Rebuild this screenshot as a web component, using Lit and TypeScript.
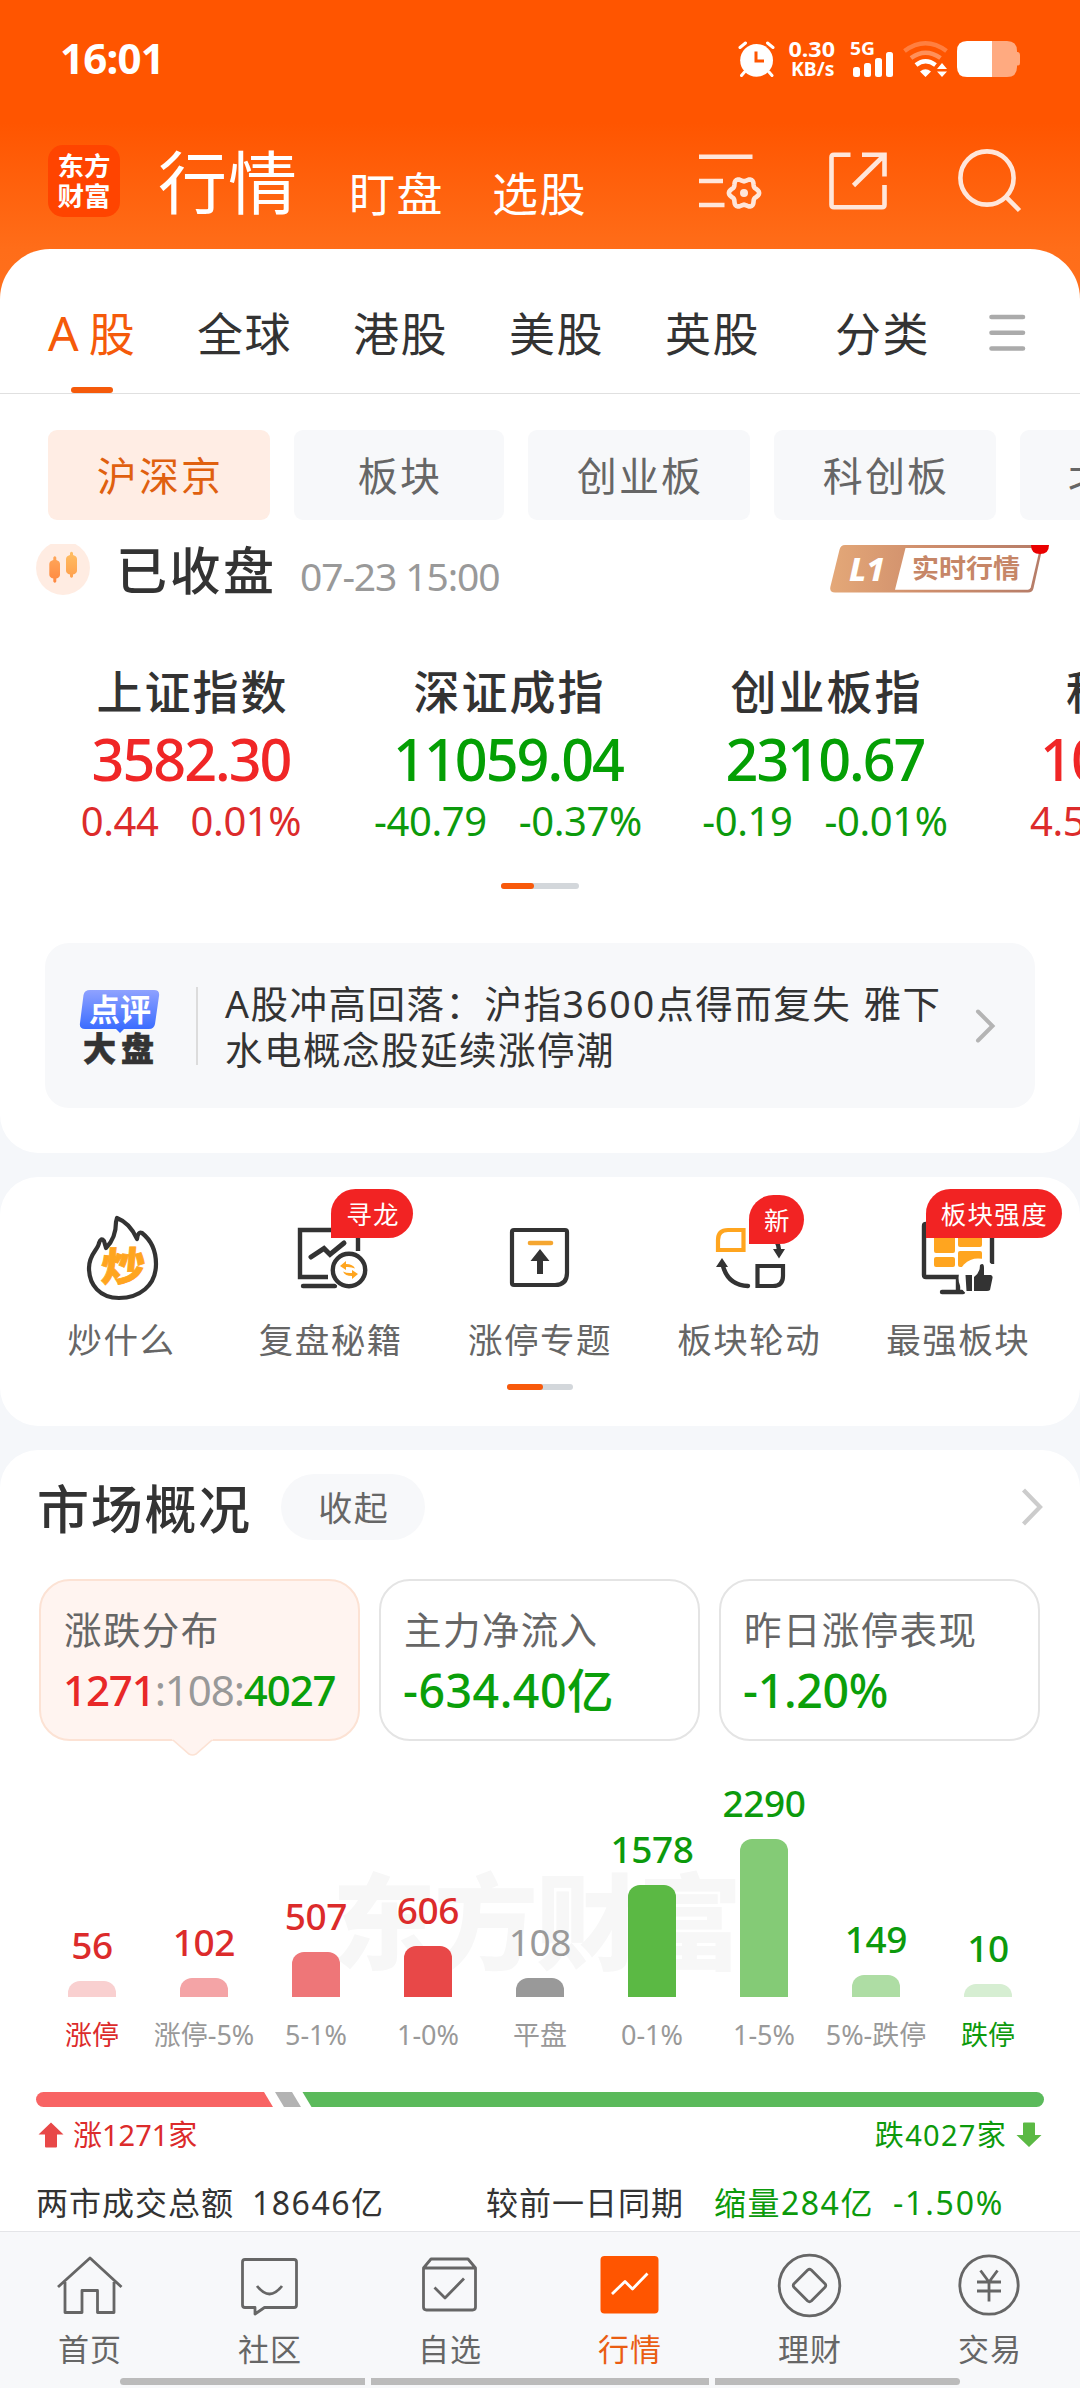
import { LitElement, html, svg, css } from "lit";
import { customElement } from "lit/decorators.js";
import { classMap } from "lit/directives/class-map.js";

interface Bar {
  count: string;
  label: string;
  height: number;
  color: string;
  tone: string;
  edge?: boolean;
}

const TABS = ["A股", "全球", "港股", "美股", "英股", "分类"];
const CHIPS = ["沪深京", "板块", "创业板", "科创板", "北"];

const INDICES = [
  { name: "上证指数", value: "3582.30", diff: "0.44", pct: "0.01%", tone: "up" },
  { name: "深证成指", value: "11059.04", diff: "-40.79", pct: "-0.37%", tone: "down" },
  { name: "创业板指", value: "2310.67", diff: "-0.19", pct: "-0.01%", tone: "down" },
  { name: "科", value: "10", diff: "4.5", pct: "", tone: "up", cut: true },
];

const BARS: Bar[] = [
  { count: "56", label: "涨停", height: 16, color: "#f9d0d0", tone: "up", edge: true },
  { count: "102", label: "涨停-5%", height: 19, color: "#f4a4a6", tone: "up" },
  { count: "507", label: "5-1%", height: 45, color: "#ee7678", tone: "up" },
  { count: "606", label: "1-0%", height: 51, color: "#e84848", tone: "up" },
  { count: "108", label: "平盘", height: 19, color: "#999999", tone: "flat" },
  { count: "1578", label: "0-1%", height: 112, color: "#5bb944", tone: "down" },
  { count: "2290", label: "1-5%", height: 158, color: "#84cb76", tone: "down" },
  { count: "149", label: "5%-跌停", height: 22, color: "#aedda4", tone: "down" },
  { count: "10", label: "跌停", height: 13, color: "#d6eed2", tone: "down", edge: true },
];

function gearPath(cx: number, cy: number): string {
  const pts: string[] = [];
  for (let i = 0; i < 72; i++) {
    const a = (i * Math.PI) / 36;
    const r = 13.4 + 1.7 * Math.cos(6 * a);
    pts.push(`${(cx + r * Math.cos(a)).toFixed(2)},${(cy + r * Math.sin(a)).toFixed(2)}`);
  }
  return `M${pts.join("L")}Z`;
}

const flame = svg`
  <path d="M116 1218 Q129 1223 136 1239 Q137 1231 141 1233 Q155 1244 155 1264 C155 1286 138 1298 118 1298 C99 1298 88 1285 88 1268 C88 1254 97 1250 98 1243 Q100 1237 103 1241 L105 1248 Q115 1238 115 1222 Z"
    fill="none" stroke="#333" stroke-width="4.2" stroke-linejoin="round"/>
  <text x="108" y="1281.500" class="chao" transform="skewX(-5)" textLength="44" lengthAdjust="spacingAndGlyphs" dx="103">炒</text>`;

const review = svg`
  <g fill="none" stroke="#333" stroke-width="4.4">
    <path d="M358 1251V1230H300V1277H328"/>
    <path d="M311 1257L324 1248.5L330 1254.5L344 1243" stroke-linecap="round" stroke-width="5"/>
    <path d="M303 1286H335" stroke-linecap="round"/>
    <circle cx="349" cy="1270" r="19.500" fill="#fff" stroke="none"/>
    <circle cx="349" cy="1270" r="16.2" fill="#fff"/>
  </g>
  <g fill="#ffa51f">
    <path d="M340 1266l6-5v3q7 0 9 4.500q-4-2-9-1.500v3z"/>
    <path d="M358 1274l-6 5v-3q-7 0-9-4.500q4 2 9 1.500v-3z"/>
  </g>`;

const limitUp = svg`
  <path d="M514 1230H565Q567 1230 567 1232V1273Q567 1285 555 1285H514Q512 1285 512 1283V1232Q512 1230 514 1230Z"
    fill="none" stroke="#333" stroke-width="4.2"/>
  <path d="M530 1243H551" stroke="#f5a630" stroke-width="4.6" stroke-linecap="round"/>
  <path d="M540 1249L549.500 1261H543V1274H537V1261H530.500Z" fill="#333"/>`;

const rotate = svg`
  <path d="M728 1230H743.500V1250H718V1240Q718 1230 728 1230Z" fill="none" stroke="#ffa51f" stroke-width="4.2"/>
  <path d="M757.500 1266H783V1276Q783 1286 773 1286H757.500Z" fill="none" stroke="#333" stroke-width="4.2"/>
  <path d="M722.500 1264Q727 1285 748 1286M770 1232Q778 1240 779 1250" fill="none" stroke="#333" stroke-width="4.4" stroke-linecap="round"/>
  <path d="M722 1258L728 1267H716ZM779 1258.500L785 1249H773Z" fill="#333"/>`;

const strongest = svg`
  <path d="M991 1264V1224H925Q923 1224 923 1226V1275Q923 1277 925 1277H957V1292" fill="none" stroke="#333" stroke-width="4.4"/>
  <path d="M941 1292H962" stroke="#333" stroke-width="4.4" stroke-linecap="round"/>
  <g fill="#ffa51f">
    <rect x="933" y="1232" width="21" height="21" rx="2"/><rect x="933" y="1257" width="21" height="10" rx="2"/>
    <rect x="957" y="1232" width="24" height="15" rx="2"/><rect x="957" y="1251" width="24" height="16" rx="2"/>
  </g>
  <circle cx="977" cy="1278" r="19.500" fill="#fff"/>
  <path d="M964.500 1275H971V1291H965.500ZM973 1277Q979 1273 979 1265Q983 1262 983 1268V1275H990Q992 1276 991.500 1278L989 1290Q988 1291 986 1291H973Z" fill="#333"/>`;

const TOOLS = [
  { label: "炒什么", cx: 121, icon: flame, badge: "", pos: "" },
  { label: "复盘秘籍", cx: 331, icon: review, badge: "寻龙", pos: "b1" },
  { label: "涨停专题", cx: 540, icon: limitUp, badge: "", pos: "" },
  { label: "板块轮动", cx: 749, icon: rotate, badge: "新", pos: "b2" },
  { label: "最强板块", cx: 957, icon: strongest, badge: "板块强度", pos: "b3" },
];

const NAV = [
  { label: "首页", cx: 90, icon: svg`<path d="M58 2287L90 2258L121.500 2287M65 2282V2312.500H82V2290.500H97.500V2312.500H114V2282"/>` },
  { label: "社区", cx: 270, icon: svg`<path d="M245 2259.500H294Q296.500 2259.500 296.500 2262V2305Q296.500 2307.500 294 2307.500H264.500L255 2314V2307.500H245Q242.500 2307.500 242.500 2305V2262Q242.500 2259.500 245 2259.500Z"/><path d="M257 2286Q269.500 2302 282 2286"/>` },
  { label: "自选", cx: 450, icon: svg`<path d="M423.500 2268V2307Q423.500 2310 426.500 2310H472.500Q475.500 2310 475.500 2307V2268L468 2259H431ZM423.500 2268H475.500M434.500 2287.500L445 2298L464 2278.500"/>` },
  { label: "行情", cx: 630, active: true, icon: svg`<rect x="600.500" y="2256" width="58" height="57.500" rx="4" fill="#ff5500" stroke="none"/><path d="M612 2294L625 2281.500L632.500 2289L647.500 2273.500" stroke="#fff"/>` },
  { label: "理财", cx: 810, icon: svg`<circle cx="809.500" cy="2285.500" r="30.300"/><path d="M807.700 2270Q809.500 2268.500 811.300 2270L825 2283.700Q826.500 2285.500 825 2287.300L811.300 2301Q809.500 2302.500 807.700 2301L794 2287.300Q792.500 2285.500 794 2283.700Z"/>` },
  { label: "交易", cx: 990, icon: svg`<circle cx="989" cy="2285" r="29.200"/><path d="M980.500 2270.500L989 2282L997.500 2270.500M989 2282V2301.500M977 2282H1001M977 2291H1001"/>` },
];

@customElement("app-root")
export class AppRoot extends LitElement {
  static styles = css`
    :host {
      display: block;
      width: 1080px;
      height: 2388px;
      overflow: hidden;
      background: #f5f7fa;
      color: #333;
      font-family: "Noto Sans", "Noto Sans CJK SC", sans-serif;
    }
    * { box-sizing: border-box; }
    svg { display: block; flex: none; overflow: visible; }
    span, div { white-space: nowrap; }
    .page { display: flex; flex-direction: column; height: 2388px; }
    .up { color: #dc2b2b; }
    .down { color: #0c9a0c; }
    .flat { color: #999; }

    .hero {
      flex: none;
      height: 302px;
      color: #fff;
      background: linear-gradient(#ff5500 0, #ff5500 122px, #ff6d19 249px, #ff701d 302px);
    }
    .statusbar { height: 118px; display: flex; align-items: center; padding-left: 60px; }
    .time { font-size: 42px; font-weight: 700; line-height: 50px; letter-spacing: -0.8px; width: 678px; padding-bottom: 2px; }
    .st { font-weight: 700; fill: #fff; }
    .head { height: 126px; display: flex; align-items: center; padding-left: 48px; }
    .logo {
      width: 72px; height: 72px; border-radius: 15px; background: #ff4400;
      display: flex; flex-direction: column; justify-content: center; align-items: center;
      font-weight: 700; font-size: 26.500px; line-height: 30px; padding: 0 0 1px 0;
    }
    .h1 { font-size: 69px; line-height: 80px; letter-spacing: 1px; margin-left: 38px; width: 191px; padding-top: 2px; }
    .h2 { font-size: 46px; line-height: 60px; letter-spacing: 1.5px; width: 143px; padding-top: 24px; }
    .h2b { width: 207px; }

    .card { flex: none; background: #fff; border-radius: 38px; }
    .first { margin-top: -53px; height: 904px; border-radius: 50px 50px 38px 38px; overflow: hidden; }
    .tabs { height: 145px; display: flex; gap: 61px; padding: 54px 0 0 48px; border-bottom: 1.5px solid #e0e0e0; }
    .tab { position: relative; font-size: 46px; line-height: 60px; letter-spacing: 1.5px; width: 95px; }
    .tab.active { color: #f55a0a; width: 88px; letter-spacing: 10px; }
    .tab.active::first-letter { font-size: 48px; }
    .tab.active::after {
      content: ""; position: absolute; left: 23px; top: 84px; width: 42px; height: 6px;
      border-radius: 3px; background: #f55a0a;
    }
    .tab.last { margin-left: 14px; }
    .menu { margin: 11px 0 0 -2px; }

    .chips { display: flex; gap: 24px; padding: 36px 0 0 48px; }
    .chip {
      flex: none; width: 222px; height: 90px; border-radius: 9px; background: #f7f8fa; color: #666;
      font-size: 40px; line-height: 91px; letter-spacing: 2.2px; text-align: center; padding-left: 2px;
    }
    .chip.two { width: 210px; }
    .chip.cut { text-align: left; padding-left: 48px; }
    .chip.on { background: #ffede4; color: #e0600f; }

    .state { display: flex; align-items: center; height: 50px; margin: 24px 0 0 36px; }
    .closed { font-size: 51px; font-weight: 500; line-height: 60px; letter-spacing: 2.5px; margin-left: 26px; width: 184px; padding-top: 1px; }
    .when { font-size: 39px; line-height: 50px; color: #999; letter-spacing: -1.1px; width: 530px; padding-top: 14px; }

    .indices { display: grid; grid-template-columns: 317px 317px 317px 96px; padding: 67px 0 0 34px; }
    .idx { text-align: center; }
    .name { font-size: 46px; font-weight: 500; line-height: 60px; letter-spacing: 2px; }
    .val { font-size: 57.500px; font-weight: 500; line-height: 60px; letter-spacing: -2px; margin: 8px 0 0 -3px; }
    .val.up { color: #f02626; }
    .val.down { color: #049f04; }
    .chg { font-size: 40px; line-height: 50px; letter-spacing: -0.4px; margin-top: 7px; display: flex; justify-content: center; gap: 32px; padding-right: 3px; }
    .idx.cut { text-align: left; }
    .cut .name { padding-left: 81px; }
    .cut .val { padding-left: 58px; }
    .cut .chg { padding-left: 45px; justify-content: flex-start; }

    .pager { display: flex; width: 78px; height: 6px; border-radius: 3px; background: #d3d7db; margin: 37px 0 0 501px; }
    .pager i { width: 33px; border-radius: 3px; background: #f8590b; }
    .pager.small { width: 66px; margin: 0 auto; }
    .pager.small i { width: 36px; }

    .news { display: flex; align-items: center; height: 165px; margin: 54px 45px 0; border-radius: 24px; background: #f7f8fa; padding-left: 35px; }
    .rule { width: 2px; height: 78px; background: #dcdcdc; margin: 0 27px 0 36px; }
    .headline { font-size: 37.500px; line-height: 46px; letter-spacing: 1.5px; word-spacing: 1px; width: 751px; padding-top: 2px; }
    .headline .num { letter-spacing: 2px; }
    .pin1 { font-size: 31px; font-weight: 700; fill: #fff; }
    .pin2 { font-size: 33px; font-weight: 900; fill: #333; stroke: #333; stroke-width: 0.6px; }

    .tools { margin-top: 24px; height: 249px; padding: 0 17px; }
    .grid5 { display: grid; grid-template-columns: repeat(5, 209.2px); height: 207px; }
    .tool { position: relative; display: flex; flex-direction: column; align-items: center; padding-top: 33px; }
    .tlabel { font-size: 34.500px; line-height: 44px; letter-spacing: 1.5px; color: #666; margin-top: 12px; }
    .chao { font-size: 40px; font-weight: 900; fill: #ffa51f; stroke: #ffa51f; stroke-width: 0.8px; }
    .badge {
      position: absolute; top: 12px; height: 49px; border-radius: 25px 25px 25px 0; background: #f22323; color: #fff;
      font-size: 25.500px; line-height: 50px; letter-spacing: 1.3px; padding-left: 15px;
    }
    .b1 { left: 105px; width: 82px; }
    .b2 { left: 104.500px; width: 55px; top: 18px; border-radius: 28px 28px 28px 0; }
    .b3 { left: 72px; width: 136px; }

    .market { margin-top: 24px; height: 900px; border-radius: 38px 38px 0 0; padding: 24px 36px 0; }
    .mhead { display: flex; align-items: center; height: 66px; }
    .mtitle { font-size: 52px; font-weight: 500; line-height: 68px; letter-spacing: 1.7px; width: 246px; padding: 3px 0 0 1px; }
    .pill { width: 144px; height: 66px; border-radius: 33px; background: #f7f8fa; color: #666; font-size: 34px; line-height: 68px; letter-spacing: 1.5px; padding-left: 37px; margin-right: 597px; }
    .cards { display: grid; grid-template-columns: repeat(3, 321px); gap: 19px; padding: 39px 0 0 3px; }
    .box { position: relative; height: 162px; border: 2px solid #e4e4e4; border-radius: 31px; padding: 23px 0 0 23px; }
    .box.sel { background: #fff4f0; border-color: #fce2d4; }
    .tip { position: absolute; left: 131px; top: 158px; }
    .blabel { font-size: 37.500px; line-height: 52px; letter-spacing: 1.4px; color: #666; }
    .bval { font-size: 46.500px; font-weight: 500; line-height: 60px; letter-spacing: 0.5px; margin: 4px 0 0 -1px; color: #0a9f0a; }
    .sel .bval { font-size: 42px; letter-spacing: -1.1px; }
    .bval.tight { letter-spacing: -0.3px; }
    .bval .r { color: #e82828; }
    .bval .g { color: #999; font-weight: 400; }

    .chart { position: relative; display: grid; grid-template-columns: repeat(9, 112px); height: 256px; }
    .mark { position: absolute; left: 296px; top: 116px; font-size: 104px; line-height: 130px; font-weight: 900; color: #f7f7f7; letter-spacing: -2px; }
    .col { position: relative; display: flex; flex-direction: column; align-items: center; justify-content: flex-end; }
    .count { font-size: 37px; line-height: 40px; letter-spacing: -0.4px; font-weight: 500; margin-bottom: 16px; }
    .count.flat { font-weight: 400; }
    .bar { width: 48px; border-radius: 12px 12px 0 0; }
    .axis { display: grid; grid-template-columns: repeat(9, 112px); font-size: 27px; line-height: 36px; color: #999; margin-top: 20px; text-align: center; }
    .axis span { margin: 0 -10px; }
    .axis .up { color: #dc2b2b; }
    .axis .down { color: #0c9a0c; }
    .ratio { margin-top: 39px; }
    .totals { display: flex; justify-content: space-between; align-items: center; font-size: 29px; line-height: 40px; margin-top: 8px; padding: 0 2px; }
    .totals div { display: flex; align-items: center; gap: 9px; }
    .totals .down { letter-spacing: 1.3px; }
    .sum { display: flex; font-size: 32px; line-height: 46px; letter-spacing: 1px; margin-top: 25px; }
    .s1 { width: 216px; }
    .s2 { width: 234px; letter-spacing: 1.5px; }
    .s3 { width: 228px; }
    .s4 { width: 179px; letter-spacing: 1.5px; }
    .s5 { letter-spacing: 1.8px; }

    .nav { position: absolute; left: 0; top: 2231px; width: 1080px; height: 157px; background: #f7f8fa; border-top: 1.5px solid #e4e5e8; }
    .items { display: grid; grid-template-columns: repeat(6, 180px); }
    .item { display: flex; flex-direction: column; align-items: center; padding-top: 17.500px; color: #666; }
    .item span { font-size: 31px; line-height: 44px; letter-spacing: 1px; margin-top: 7px; }
    .item.on { color: #ea5d12; }
    .grips { display: flex; gap: 6px; margin: 7px 0 0 120px; }
    .grips i { height: 7px; width: 245px; background: #bbb; border-radius: 4px 0 0 4px; }
    .grips i + i { width: 338px; border-radius: 0; }
    .grips i + i + i { width: 245px; border-radius: 0 4px 4px 0; }
  `;

  private statusIcons() {
    return html`<svg width="284" height="38" viewBox="738 40 284 38" fill="none" stroke="#fff" stroke-linecap="round">
      <circle cx="756.600" cy="60.300" r="16.400" fill="#fff" stroke="none"/>
      <path d="M740 47.500L745.500 43M767.500 43L773 47.500M744.500 72L741.500 75.500M769 72L772 75.500" stroke-width="3"/>
      <path d="M756 51.500V61H764" stroke="#ff5500" stroke-width="3" stroke-linecap="butt"/>
      <g stroke="none" class="st">
        <text x="788.500" y="56.500" font-size="21.500" textLength="46.500" lengthAdjust="spacingAndGlyphs">0.30</text>
        <text x="791" y="75.500" font-size="19.500" textLength="43.500" lengthAdjust="spacingAndGlyphs">KB/s</text>
        <text x="850" y="54.500" font-size="18" textLength="25" lengthAdjust="spacingAndGlyphs">5G</text>
      </g>
      <g fill="#fff" stroke="none">
        <rect x="853" y="67" width="7" height="10" rx="2.500"/><rect x="864" y="63" width="7" height="14" rx="2.500"/>
        <rect x="875" y="58" width="7" height="19" rx="2.500"/><rect x="886" y="52" width="7" height="25" rx="2.500"/>
      </g>
      <g stroke-width="4.500" stroke-linecap="butt">
        <path d="M904.500 51Q925.500 35.500 946.500 51" stroke-opacity=".25"/>
        <path d="M911 58Q925.500 47.500 940.500 58" stroke-opacity=".35"/>
        <path d="M916 65Q925.500 57.500 935.500 65"/>
      </g>
      <path d="M920 71.500Q925.500 67 931 71.500L925.500 77ZM942 63L947 69H937ZM942 77L937 71.500H947Z" fill="#fff" stroke="none"/>
      <g stroke="none" fill="#fff">
        <path d="M992 41H1007Q1017 41 1017 51V52H1018Q1020 52.500 1020 55V63Q1020 65.500 1018 65.500H1017V67Q1017 77 1007 77H992Z" fill-opacity=".5"/>
        <path d="M992 41H967Q957 41 957 51V67Q957 77 967 77H992Z"/>
      </g>
    </svg>`;
  }

  private headIcons() {
    return html`<svg width="324" height="66" viewBox="699 148 324 66" fill="none" stroke="#ffe6da" stroke-width="4.600">
      <path d="M699 156.800H752.500M699 181H723M699 205H724.500"/>
      <path d=${gearPath(744, 193)}/>
      <circle cx="744" cy="193" r="4" fill="#ffe6da" stroke="none"/>
      <path d="M850.500 154.800H834Q831.500 154.800 831.500 157.300V204.700Q831.500 207.200 834 207.200H882Q884.500 207.200 884.500 204.700V185M862 154.800H884.500V176.500M884 155.500L853.500 185.500"/>
      <circle cx="987" cy="178" r="26.600"/>
      <path d="M1006 196.800L1019.500 210.500"/>
    </svg>`;
  }

  private levelBadge() {
    return html`<svg width="220" height="48" viewBox="831 549 220 50" preserveAspectRatio="none">
      <defs>
        <linearGradient id="cu" x1="0" x2="1"><stop offset="0" stop-color="#e4a878"/><stop offset=".45" stop-color="#cf8e6c"/><stop offset="1" stop-color="#b57c68"/></linearGradient>
      </defs>
      <path d="M846 549H1044L1034.500 594Q1033.500 598.500 1029 598.500H836Q830 598.500 831.500 592L840.500 554Q841.500 549 846 549Z" fill="url(#cu)"/>
      <path d="M906.500 552H1041L1031.800 593Q1031 595.500 1029 595.500H896Z" fill="#fff"/>
      <path d="M1032 549H1050Q1050 558.500 1041 558.500Q1032 558.500 1032 549Z" fill="#ea0000"/>
      <text x="850" y="586" font-size="33" font-weight="800" font-style="italic" fill="#fff" textLength="36" lengthAdjust="spacingAndGlyphs">L1</text>
      <text x="913" y="583.500" font-size="27" font-weight="700" fill="#c68667" textLength="108">实时行情</text>
    </svg>`;
  }

  render() {
    return html`<div class="page">
      <header class="hero">
        <div class="statusbar"><span class="time">16:01</span>${this.statusIcons()}</div>
        <div class="head">
          <div class="logo"><span>东方</span><span>财富</span></div>
          <span class="h1">行情</span><span class="h2">盯盘</span><span class="h2 h2b">选股</span>
          ${this.headIcons()}
        </div>
      </header>

      <section class="card first">
        <div class="tabs">
          ${TABS.map((t, i) => html`<span class=${classMap({ tab: true, active: i === 0, last: i === 5 })}>${t}</span>`)}
          <svg class="menu" width="37" height="40" viewBox="0 0 37 40" stroke="#ababab" stroke-width="4.600" stroke-linecap="round"><path d="M2.500 3H34M2.500 18.700H34M2.500 34.500H34"/></svg>
        </div>
        <div class="chips">
          ${CHIPS.map((c, i) => html`<div class=${classMap({ chip: true, on: i === 0, two: c.length === 2, cut: i === 4 })}>${c}</div>`)}
        </div>
        <div class="state">
          <svg width="54" height="50" viewBox="36 544 54 50">
            <defs><linearGradient id="k1" x2="0" y2="1"><stop stop-color="#ffa75a"/><stop offset="1" stop-color="#ff8840"/></linearGradient>
            <linearGradient id="k2" x2="0" y2="1"><stop stop-color="#ffbe62"/><stop offset="1" stop-color="#ffa04e"/></linearGradient></defs>
            <path d="M50.600 544H75.400A27 27 0 1 1 50.600 544Z" fill="#ffece2"/>
            <path d="M53.300 557.500Q54.800 555 56.300 557.500V560Q60 561 60 564V574.500Q60 577.500 56.300 578.500V581.500Q54.800 584 53.300 581.500V578.500Q49.300 577.500 49.300 574.500V564Q49.300 561 53.300 560Z" fill="url(#k1)"/>
            <path d="M70 553Q71.500 550.500 73 553V555Q77 556 77 559V570.500Q77 573.500 73 574.500V576.500Q71.500 579 70 576.500V574.500Q66 573.500 66 570.500V559Q66 556 70 555Z" fill="url(#k2)"/>
          </svg>
          <span class="closed">已收盘</span><span class="when">07-23 15:00</span>
          ${this.levelBadge()}
        </div>
        <div class="indices">
          ${INDICES.map((x) => html`<div class=${classMap({ idx: true, cut: !!x.cut })}>
            <div class="name">${x.name}</div>
            <div class="val ${x.tone}">${x.value}</div>
            <div class="chg ${x.tone}"><span>${x.diff}</span>${x.pct ? html`<span>${x.pct}</span>` : ""}</div>
          </div>`)}
        </div>
        <div class="pager"><i></i></div>
        <div class="news">
          <svg width="80" height="76" viewBox="80 987 80 76">
            <defs><linearGradient id="bl" x2="0" y2="1"><stop stop-color="#8fa2ff"/><stop offset="1" stop-color="#3267ff"/></linearGradient></defs>
            <path d="M90 989H154Q160 989 159 995L155 1023Q154 1028 149 1028H124L120 1032L116 1028H85Q79 1028 80 1022L83.500 994Q84.500 989 90 989Z" fill="url(#bl)"/>
            <text class="pin1" x="89" y="1019.500" textLength="62">点评</text>
            <text class="pin2" x="83" y="1059.500" textLength="71">大盘</text>
          </svg>
          <i class="rule"></i>
          <div class="headline">A股冲高回落：沪指<span class="num">3600</span>点得而复失 雅下<br>水电概念股延续涨停潮</div>
          <svg width="20" height="34" viewBox="0 0 20 34" fill="none" stroke="#b4b4b4" stroke-width="4" stroke-linecap="round"><path d="M2 2.500L16.500 17L2 31.500"/></svg>
        </div>
      </section>

      <section class="card tools">
        <div class="grid5">
          ${TOOLS.map((t) => html`<div class="tool">
            <svg width="90" height="96" viewBox="${t.cx - 45} 1210 90 96">${t.icon}</svg>
            <span class="tlabel">${t.label}</span>
            ${t.badge ? html`<span class="badge ${t.pos}">${t.badge}</span>` : ""}
          </div>`)}
        </div>
        <div class="pager small"><i></i></div>
      </section>

      <section class="card market">
        <div class="mhead">
          <span class="mtitle">市场概况</span><span class="pill">收起</span>
          <svg width="22" height="40" viewBox="0 0 22 40" fill="none" stroke="#ccc" stroke-width="4.200"><path d="M1.500 3L18 20L1.500 37"/></svg>
        </div>
        <div class="cards">
          <div class="box sel">
            <div class="blabel">涨跌分布</div>
            <div class="bval"><span class="r">1271</span><span class="g">:108:</span><span>4027</span></div>
            <svg class="tip" width="42" height="17" viewBox="0 0 42 17"><path d="M0 0L1 2L17 15Q20.500 17 24 15L40 2L41 0Z" fill="#fff4f0"/><path d="M1 1L17 15Q20.500 17 24 15L40 1" fill="none" stroke="#fce2d4" stroke-width="1.600"/></svg>
          </div>
          <div class="box"><div class="blabel">主力净流入</div><div class="bval">-634.40亿</div></div>
          <div class="box"><div class="blabel">昨日涨停表现</div><div class="bval tight">-1.20%</div></div>
        </div>
        <div class="chart">
          <span class="mark">东方财富</span>
          ${BARS.map((b) => html`<div class="col">
            <span class="count ${b.tone}">${b.count}</span>
            <div class="bar" style="height:${b.height}px;background:${b.color}"></div>
          </div>`)}
        </div>
        <div class="axis">${BARS.map((b) => html`<span class=${b.edge ? b.tone : ""}>${b.label}</span>`)}</div>
        <svg class="ratio" width="1008" height="15" viewBox="36 0 1008 15">
          <path d="M43.500 0H264L273 15H43.500A7.500 7.500 0 0 1 43.500 0Z" fill="#f86464"/>
          <path d="M275 0H292L301 15H284Z" fill="#b3b3b3"/>
          <path d="M302.500 0H1036.500A7.500 7.500 0 0 1 1036.500 15H311.500Z" fill="#5bba5b"/>
        </svg>
        <div class="totals">
          <div class="up"><svg width="26" height="26" viewBox="0 0 26 26" fill="#e84848"><path d="M13 0.500L25.500 12.500H19V24.500Q19 25.500 18 25.500H8Q7 25.500 7 24.500V12.500H0.500Z"/></svg><span>涨1271家</span></div>
          <div class="down"><span>跌4027家</span><svg width="26" height="26" viewBox="0 0 26 26" fill="#5bb944"><path d="M13 25L25.500 13H19V1.500Q19 0.500 18 0.500H8Q7 0.500 7 1.500V13H0.500Z"/></svg></div>
        </div>
        <div class="sum">
          <span class="s1">两市成交总额</span><span class="s2">18646亿</span><span class="s3">较前一日同期</span><span class="s4 down">缩量284亿</span><span class="s5 down">-1.50%</span>
        </div>
      </section>

      <nav class="nav">
        <div class="items">
          ${NAV.map((n) => html`<div class=${classMap({ item: true, on: !!n.active })}>
            <svg width="80" height="70" viewBox="${n.cx - 40} 2250 80 70" fill="none" stroke=${n.active ? "#ff5500" : "#666"} stroke-width="2.800" stroke-linejoin="round">${n.icon}</svg>
            <span>${n.label}</span>
          </div>`)}
        </div>
        <div class="grips"><i></i><i></i><i></i></div>
      </nav>
    </div>`;
  }
}
